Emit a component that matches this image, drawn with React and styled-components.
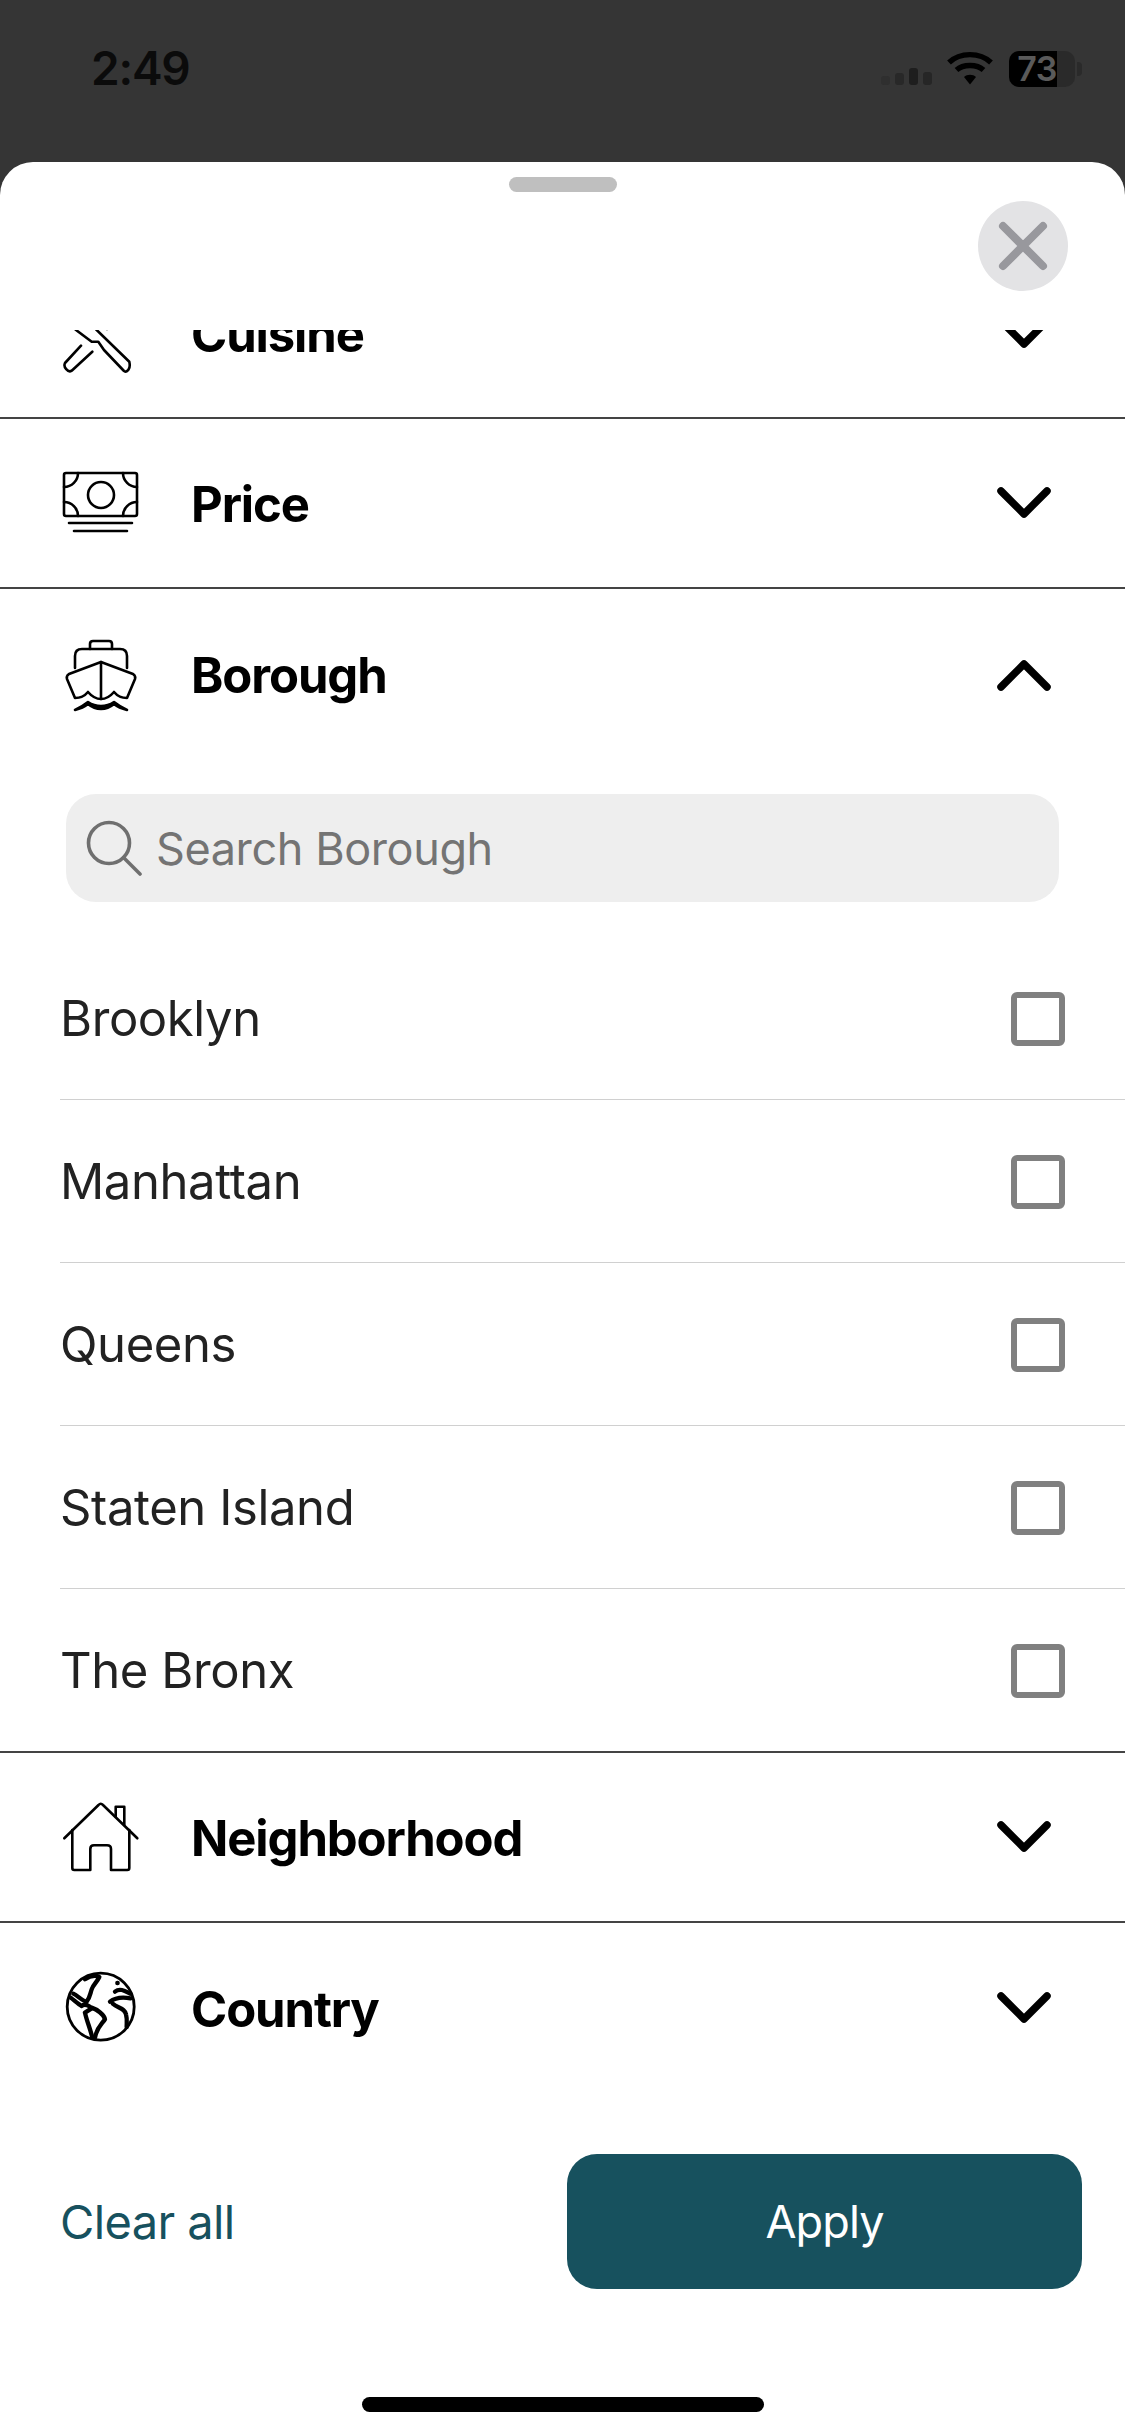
import styled, { createGlobalStyle } from "styled-components"

const GlobalStyle = createGlobalStyle`
  html, body {
    margin: 0;
    background: #353535;
  }

  * {
    box-sizing: border-box;
  }
`

const Screen = styled.div`
  width: 1125px;
  height: 2436px;
  overflow: hidden;
  display: flex;
  flex-direction: column;
  background: #353535;
  font-family: Inter, "Noto Sans", sans-serif;
`

const StatusBar = styled.div`
  height: 162px;
  flex: none;
  display: flex;
  justify-content: space-between;
  align-items: flex-start;
  padding: 40px 43px 0 91px;
`

const Time = styled.span`
  font-size: 46px;
  line-height: 56px;
  font-weight: 600;
  letter-spacing: -1.2px;
  color: #0b0b0b;
`

const StatusIcons = styled.div`
  display: flex;
  align-items: flex-start;
  margin-top: 11px;
`

const Battery = styled.div`
  position: relative;
  width: 66px;
  height: 36px;
  margin-left: 16px;
  border-radius: 10px;
  overflow: hidden;
  background: #2a2a2a;
  color: #5a5a5a;
  font-size: 34px;
  line-height: 36px;
  font-weight: 600;
  letter-spacing: -0.5px;
  text-align: center;
`

const BatteryFill = styled.div`
  position: absolute;
  inset: 0 18px 0 0;
  background: #000;
`

const BatteryLabel = styled.span`
  position: relative;
  left: -5px;
`

const BatteryNub = styled.div`
  width: 5px;
  height: 14px;
  margin: 11px 0 0 2px;
  border-radius: 0 4px 4px 0;
  background: #2a2a2a;
`

const Sheet = styled.div`
  flex: 1;
  min-height: 0;
  display: flex;
  flex-direction: column;
  background: #fff;
  border-radius: 33px 33px 0 0;
`

const SheetHeader = styled.div`
  position: relative;
  height: 168px;
  flex: none;
  display: flex;
  justify-content: center;
  padding-top: 15px;
`

const Handle = styled.div`
  width: 108px;
  height: 15px;
  border-radius: 8px;
  background: #bfbfbf;
`

const CloseButton = styled.button`
  position: absolute;
  top: 39px;
  right: 57px;
  width: 90px;
  height: 90px;
  padding: 0;
  border: 0;
  border-radius: 50%;
  display: flex;
  align-items: center;
  justify-content: center;
  background: #e3e3e5;
`

const List = styled.div`
  flex: none;
  height: 1762px;
  overflow: hidden;
`

const SectionRow = styled.div`
  height: 170px;
  margin-top: ${({ $offset }) => $offset || 0}px;
  display: flex;
  align-items: center;
  padding: 0 71px 0 61px;
  border-bottom: ${({ $plain }) => ($plain ? "0" : "2px solid #444")};
`

const SectionTitle = styled.span`
  flex: 1;
  margin-left: 50px;
  padding-top: 2px;
  font-size: 49px;
  font-weight: 700;
  letter-spacing: -1.1px;
  color: #000;
`

const SearchBox = styled.div`
  height: 108px;
  margin: 35px 66px;
  display: flex;
  align-items: center;
  padding-left: 20px;
  border-radius: 30px;
  background: #eeeeee;
`

const SearchText = styled.span`
  margin-left: 14px;
  font-size: 45px;
  letter-spacing: -0.4px;
  color: #747474;
`

const Options = styled.div`
  padding-left: 60px;
  border-bottom: 2px solid #444;
`

const OptionRow = styled.div`
  height: ${({ $last }) => ($last ? 162 : 163)}px;
  display: flex;
  align-items: center;
  justify-content: space-between;
  padding: 1px 60px 0 0;
  border-bottom: ${({ $last }) => ($last ? "0" : "1.5px solid #d0d0d0")};
`

const OptionLabel = styled.span`
  font-size: 49px;
  letter-spacing: -0.4px;
  color: #222;
`

const Checkbox = styled.div`
  width: 54px;
  height: 54px;
  border: 6px solid #808080;
  border-radius: 6px;
`

const Footer = styled.div`
  margin-top: 62px;
  display: flex;
  align-items: center;
  justify-content: space-between;
  padding: 0 43px 0 60px;
`

const ClearAll = styled.span`
  font-size: 47px;
  letter-spacing: -0.6px;
  color: #17515e;
`

const ApplyButton = styled.button`
  width: 515px;
  height: 135px;
  border: 0;
  border-radius: 30px;
  background: #17515e;
  color: #fff;
  font-family: inherit;
  font-size: 45px;
  letter-spacing: -0.9px;
`

const HomeBar = styled.div`
  width: 402px;
  height: 15px;
  margin: 108px auto 0;
  border-radius: 8px;
  background: #000;
`

function Icon ({ children }) {
  return (
    <svg width="80" height="80" viewBox="0 0 80 80" fill="none" stroke="#000" strokeWidth="2.6" strokeLinecap="round" strokeLinejoin="round">
      {children}
    </svg>
  )
}

const CuisineIcon = () => (
  <Icon>
    <path d="M-2 20L15 37L30.7 48.7H37.3L43 57L63 78C66 80 70 76 68.3 68.7L35.7 37L20 20" />
    <path d="M20 52.7L4 70C2 74 7 80 10.7 77.7L31.3 58.7" />
    <path d="M46 36L66 16" />
  </Icon>
)

const PriceIcon = () => (
  <Icon>
    <rect x="3" y="10" width="73" height="43" rx="2" />
    <circle cx="40" cy="32" r="13" />
    <path d="M17 10A14 14 0 0 1 3 24M62 10A14 14 0 0 0 76 24M3 39A14 14 0 0 1 17 53M76 39A14 14 0 0 0 62 53" />
    <path d="M8 60H71M13 68H66" />
  </Icon>
)

const BoroughIcon = () => (
  <Icon>
    <path d="M29 15V10Q29 7 32 7H48Q51 7 51 10V15" />
    <path d="M14 34V22Q14 15 21 15H59Q66 15 66 22V34" />
    <path d="M40 28L8 40Q5 42 6 45L14 64Q22 64 27 58Q33 65 40 65Q47 65 53 58Q58 64 66 64L74 45Q75 42 72 40Z" />
    <path d="M40 28V65" />
    <path d="M14 76Q22 74 27 70Q33 75 40 75Q47 75 53 70Q58 74 66 76Q58 72 53 68Q47 72 40 72Q33 72 27 68Q22 72 14 76Z" fill="#000" />
  </Icon>
)

const NeighborhoodIcon = () => (
  <Icon>
    <path d="M3.3 41.3L37.5 8Q39.7 5.5 42 8L76.3 41.3" />
    <path d="M11.3 33V71Q11.3 73 13.3 73H29.3V52Q29.3 48.3 33 48.3H46Q50 48.3 50 52V73H66.3Q68.3 73 68.3 71V33" />
    <path d="M54.7 19.7V9.7H63.3V28" />
  </Icon>
)

const CountryIcon = () => (
  <Icon>
    <circle cx="39.7" cy="38.7" r="33.5" strokeWidth="2.8" />
    <g transform="translate(-31 -197) scale(0.3333)" strokeWidth="13">
      <path d="M122 680C135 690 145 700 155 705C165 695 175 705 185 710C200 715 222 730 225 745C215 760 200 770 195 800" />
      <path d="M165 725C170 750 180 770 187 800M165 725L185 712" />
      <path d="M165 625C180 615 195 612 208 618C200 635 190 640 185 655C180 670 180 680 170 692C155 690 145 675 130 668" />
      <path d="M240 692C255 680 280 678 302 682" />
      <path d="M248 698C265 712 285 712 288 730C292 745 290 755 290 768" />
      <path d="M255 662C270 650 285 660 300 668M262 636H263" />
    </g>
  </Icon>
)

function Chevron ({ up }) {
  return (
    <svg width="60" height="40" viewBox="0 0 60 40" fill="none" stroke="#000" strokeWidth="7.5" strokeLinecap="round" strokeLinejoin="round">
      <path d={up ? "M7 33L30 10L53 33" : "M7 8L30 31L53 8"} />
    </svg>
  )
}

function Section ({ icon, title, open, plain, offset }) {
  return (
    <SectionRow $plain={plain} $offset={offset}>
      {icon}
      <SectionTitle>{title}</SectionTitle>
      <Chevron up={open} />
    </SectionRow>
  )
}

const boroughs = ["Brooklyn", "Manhattan", "Queens", "Staten Island", "The Bronx"]

export default function App () {
  return (
    <Screen>
      <GlobalStyle />
      <StatusBar>
        <Time>2:49</Time>
        <StatusIcons>
          <svg width="51" height="34" viewBox="0 0 51 34">
            <rect x="0" y="25" width="9" height="9" rx="3" fill="#2f2f2f" />
            <rect x="14" y="22" width="9" height="12" rx="3" fill="#282828" />
            <rect x="28" y="17" width="9" height="17" rx="3" fill="#1e1e1e" />
            <rect x="42" y="21" width="9" height="13" rx="3" fill="#262626" />
          </svg>
          <svg width="46" height="34" viewBox="0 0 46 34" fill="none" stroke="#000" strokeWidth="5.4" style={{ marginLeft: 15 }}>
            <path d="M2 11.5C13 1 33 1 44 11.5" />
            <path d="M9.5 19C16 13 30 13 36.5 19" />
            <path d="M17 26L23 33.5L29 26C26 23 20 23 17 26Z" fill="#000" stroke="none" />
          </svg>
          <Battery>
            <BatteryFill />
            <BatteryLabel>73</BatteryLabel>
          </Battery>
          <BatteryNub />
        </StatusIcons>
      </StatusBar>
      <Sheet>
        <SheetHeader>
          <Handle />
          <CloseButton aria-label="Close">
            <svg width="56" height="56" viewBox="0 0 56 56" fill="none" stroke="#98989d" strokeWidth="8" strokeLinecap="round">
              <path d="M8 8L48 48M48 8L8 48" />
            </svg>
          </CloseButton>
        </SheetHeader>
        <List>
          <Section icon={<CuisineIcon />} title="Cuisine" offset={-81} />
          <Section icon={<PriceIcon />} title="Price" />
          <Section icon={<BoroughIcon />} title="Borough" open plain />
          <SearchBox>
            <svg width="56" height="56" viewBox="0 0 56 56" fill="none" stroke="#6f6f6f" strokeWidth="3.6" strokeLinecap="round">
              <circle cx="23" cy="23" r="20.5" />
              <path d="M37.5 37.5L54 54" />
            </svg>
            <SearchText>Search Borough</SearchText>
          </SearchBox>
          <Options>
            {boroughs.map((name, i) => (
              <OptionRow key={name} $last={i === boroughs.length - 1}>
                <OptionLabel>{name}</OptionLabel>
                <Checkbox />
              </OptionRow>
            ))}
          </Options>
          <Section icon={<NeighborhoodIcon />} title="Neighborhood" />
          <Section icon={<CountryIcon />} title="Country" plain />
        </List>
        <Footer>
          <ClearAll>Clear all</ClearAll>
          <ApplyButton>Apply</ApplyButton>
        </Footer>
        <HomeBar />
      </Sheet>
    </Screen>
  )
}
